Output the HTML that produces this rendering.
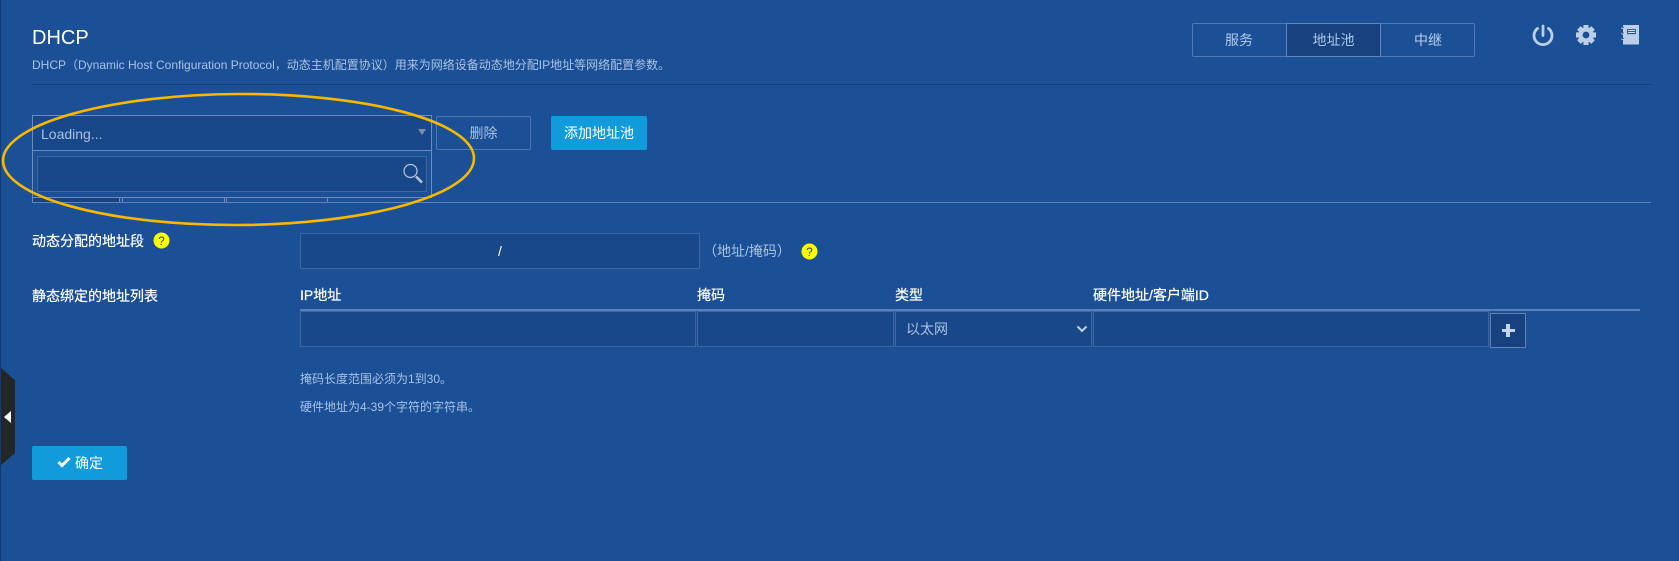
<!DOCTYPE html>
<html lang="zh">
<head>
<meta charset="utf-8">
<title>DHCP</title>
<style>
html,body{margin:0;padding:0;width:1679px;height:561px;overflow:hidden;background:#1b4f96;}
body{position:relative;font-family:"Liberation Sans","Noto Sans CJK SC",sans-serif;color:#fff;}
.a{position:absolute;box-sizing:border-box;}
.t{position:absolute;white-space:nowrap;line-height:20px;}
.in{position:absolute;box-sizing:border-box;background:#19488a;border:1px solid #3f679f;}
.lbl{font-size:14px;color:#fff;-webkit-text-stroke:.2px #fff;}
.note{font-size:12px;color:#a9c3e4;}
.btn{position:absolute;box-sizing:border-box;text-align:center;font-size:14px;border-radius:2px;}
.tab{position:absolute;box-sizing:border-box;top:23px;height:34px;line-height:34px;text-align:center;font-size:14px;color:#b4cbe9;}
</style>
</head>
<body>
<div class="a" style="left:0;top:0;width:1px;height:561px;background:#123a70"></div>

<div class="t" style="left:32px;top:26px;font-size:20px;line-height:24px;color:#fff">DHCP</div>
<div class="t" style="left:32px;top:55px;font-size:12px;color:#a9c3e4">DHCP（Dynamic Host Configuration Protocol，动态主机配置协议）用来为网络设备动态地分配IP地址等网络配置参数。</div>
<div class="a" style="left:32px;top:84px;width:1619px;height:1px;background:#153f78"></div>

<div class="a" style="left:1192px;top:23px;width:283px;height:34px;border:1px solid #5478b0;border-radius:2px"></div>
<div class="tab" style="left:1192px;width:94px">服务</div>
<div class="tab" style="left:1286px;width:95px;background:#17427f;border:1px solid #6287bb;line-height:32px;color:#a9c8ec">地址池</div>
<div class="tab" style="left:1381px;width:94px">中继</div>

<svg class="a" style="left:1530px;top:22px" width="120" height="26" viewBox="0 0 120 26">
  <path d="M7.500 6.500A9 9 0 1 0 18.500 6.500" fill="none" stroke="#bccfe8" stroke-width="2.800" stroke-linecap="round"/>
  <path d="M13 4V13.500" fill="none" stroke="#bccfe8" stroke-width="2.800" stroke-linecap="round"/>
  <g transform="translate(56,13)" fill="#bccfe8">
    <circle r="7.500"/>
    <rect x="-2.600" y="-10" width="5.200" height="20" rx=".6"/>
    <rect x="-2.600" y="-10" width="5.200" height="20" rx=".6" transform="rotate(45)"/>
    <rect x="-2.600" y="-10" width="5.200" height="20" rx=".6" transform="rotate(90)"/>
    <rect x="-2.600" y="-10" width="5.200" height="20" rx=".6" transform="rotate(135)"/>
    <circle r="3.400" fill="#1b4f96"/>
  </g>
  <g>
    <rect x="93" y="3" width="16" height="19.500" fill="#bccfe8"/>
    <path d="M91.500 6.500c2-1 3.500 0 3.500 1M91.500 12c2-1 3.500 0 3.500 1M91.500 17.500c2-1 3.500 0 3.500 1" fill="none" stroke="#bccfe8" stroke-width="1.400"/>
    <path d="M93 4.800v1M93 10.500v1M93 16v1" stroke="#1b4f96" stroke-width="1.500"/>
    <rect x="97" y="7" width="9" height="5.200" fill="#2a5c9f"/>
    <rect x="98" y="8" width="7" height="1" fill="#d3dff0"/>
    <rect x="98" y="10" width="7" height="1" fill="#d3dff0"/>
  </g>
</svg>

<!-- select -->
<div class="a" style="left:32px;top:115px;width:400px;height:36px;background:#19488a;border:1px solid #6c8cbd"></div>
<div class="t" style="left:41px;top:124px;font-size:14px;color:#a9c1e0">Loading...</div>
<div class="a" style="left:418px;top:129px;width:0;height:0;border-left:4px solid transparent;border-right:4px solid transparent;border-top:6px solid #7f8ea6"></div>
<div class="a" style="left:32px;top:150px;width:400px;height:48px;background:#1b4f96;border:1px solid #6c8cbd"></div>
<div class="in" style="left:37px;top:156px;width:390px;height:36px"></div>
<svg class="a" style="left:401px;top:162px" width="24" height="24" viewBox="0 0 24 24">
  <circle cx="9.500" cy="9" r="6.500" fill="none" stroke="#b5c6dd" stroke-width="1.200"/>
  <path d="M15 14.500L21 20.500" stroke="#b5c6dd" stroke-width="2.600"/>
</svg>
<div class="a" style="left:33px;top:198px;width:86px;height:4px;background:#17427f"></div>
<div class="a" style="left:119px;top:198px;width:1px;height:4px;background:#6c8cbd"></div>
<div class="a" style="left:122px;top:198px;width:1px;height:4px;background:#6c8cbd"></div>
<div class="a" style="left:224px;top:198px;width:1px;height:4px;background:#6c8cbd"></div>
<div class="a" style="left:226px;top:198px;width:1px;height:4px;background:#6c8cbd"></div>
<div class="a" style="left:327px;top:198px;width:1px;height:4px;background:#6c8cbd"></div>
<div class="a" style="left:32px;top:197px;width:1px;height:5px;background:#6c8cbd"></div>
<div class="a" style="left:32px;top:202px;width:1619px;height:1px;background:#5f82b8"></div>

<div class="btn" style="left:436px;top:116px;width:95px;height:34px;line-height:32px;border:1px solid #4f76ae;color:#a9c1e0">删除</div>
<div class="btn" style="left:551px;top:116px;width:96px;height:34px;line-height:34px;background:#129bdb;color:#fff">添加地址池</div>

<svg class="a" style="left:0;top:85px" width="500" height="150" viewBox="0 85 500 150">
  <ellipse cx="238.500" cy="159.500" rx="235.500" ry="65.500" fill="none" stroke="#f9b800" stroke-width="2.600" transform="rotate(-0.300 238.500 159.500)"/>
</svg>

<div class="t lbl" style="left:32px;top:231px">动态分配的地址段</div>
<svg class="a" style="left:153px;top:232px" width="17" height="17" viewBox="0 0 17 17">
  <circle cx="8.500" cy="8.500" r="8" fill="#ffff00"/>
  <text x="8.500" y="13" text-anchor="middle" font-size="12" font-family="Liberation Sans" fill="#2a4a60">?</text>
</svg>
<div class="in" style="left:300px;top:233px;width:400px;height:36px"></div>
<div class="t" style="left:498px;top:241px;font-size:14px;color:#fff">/</div>
<div class="t" style="left:703px;top:241px;font-size:14px;color:#a9c3e4">（地址/掩码）</div>
<svg class="a" style="left:801px;top:243px" width="17" height="17" viewBox="0 0 17 17">
  <circle cx="8.500" cy="8.500" r="8" fill="#ffff00"/>
  <text x="8.500" y="13" text-anchor="middle" font-size="12" font-family="Liberation Sans" fill="#2a4a60">?</text>
</svg>

<div class="t lbl" style="left:32px;top:286px">静态绑定的地址列表</div>
<div class="t lbl" style="left:300px;top:285px">IP地址</div>
<div class="t lbl" style="left:697px;top:285px">掩码</div>
<div class="t lbl" style="left:895px;top:285px">类型</div>
<div class="t lbl" style="left:1093px;top:285px">硬件地址/客户端ID</div>
<div class="a" style="left:300px;top:309px;width:1340px;height:2px;background:#5c7fb8"></div>

<div class="in" style="left:300px;top:311px;width:396px;height:36px"></div>
<div class="in" style="left:697px;top:311px;width:197px;height:36px"></div>
<div class="in" style="left:895px;top:311px;width:197px;height:36px"></div>
<div class="t" style="left:906px;top:319px;font-size:14px;color:#a9c1e0">以太网</div>
<svg class="a" style="left:1076px;top:325px" width="12" height="8" viewBox="0 0 12 8"><path d="M1.500 1.500L6 6L10.500 1.500" fill="none" stroke="#c3d3e8" stroke-width="2"/></svg>
<div class="in" style="left:1093px;top:311px;width:396px;height:36px"></div>
<div class="a" style="left:1490px;top:313px;width:36px;height:35px;background:#17427f;border:1px solid #5f82b8"></div>
<div class="a" style="left:1502px;top:329px;width:13px;height:3px;background:#c3d3e8"></div>
<div class="a" style="left:1506px;top:324px;width:4px;height:13px;background:#c3d3e8"></div>

<div class="t note" style="left:300px;top:369px">掩码长度范围必须为1到30。</div>
<div class="t note" style="left:300px;top:397px">硬件地址为4-39个字符的字符串。</div>

<div class="btn" style="left:32px;top:446px;width:95px;height:34px;background:#129bdb"></div>
<svg class="a" style="left:57px;top:456px" width="14" height="12" viewBox="0 0 14 12"><path d="M1.500 6L5 9.500L12.500 2" fill="none" stroke="#fff" stroke-width="3"/></svg>
<div class="t" style="left:75px;top:453px;font-size:14px;color:#fff">确定</div>

<svg class="a" style="left:0;top:360px" width="16" height="110" viewBox="0 0 16 110">
  <path d="M1 8L15 20V93L1 105Z" fill="#222628"/>
  <path d="M4 57L11 51V63Z" fill="#fff"/>
</svg>
</body>
</html>
